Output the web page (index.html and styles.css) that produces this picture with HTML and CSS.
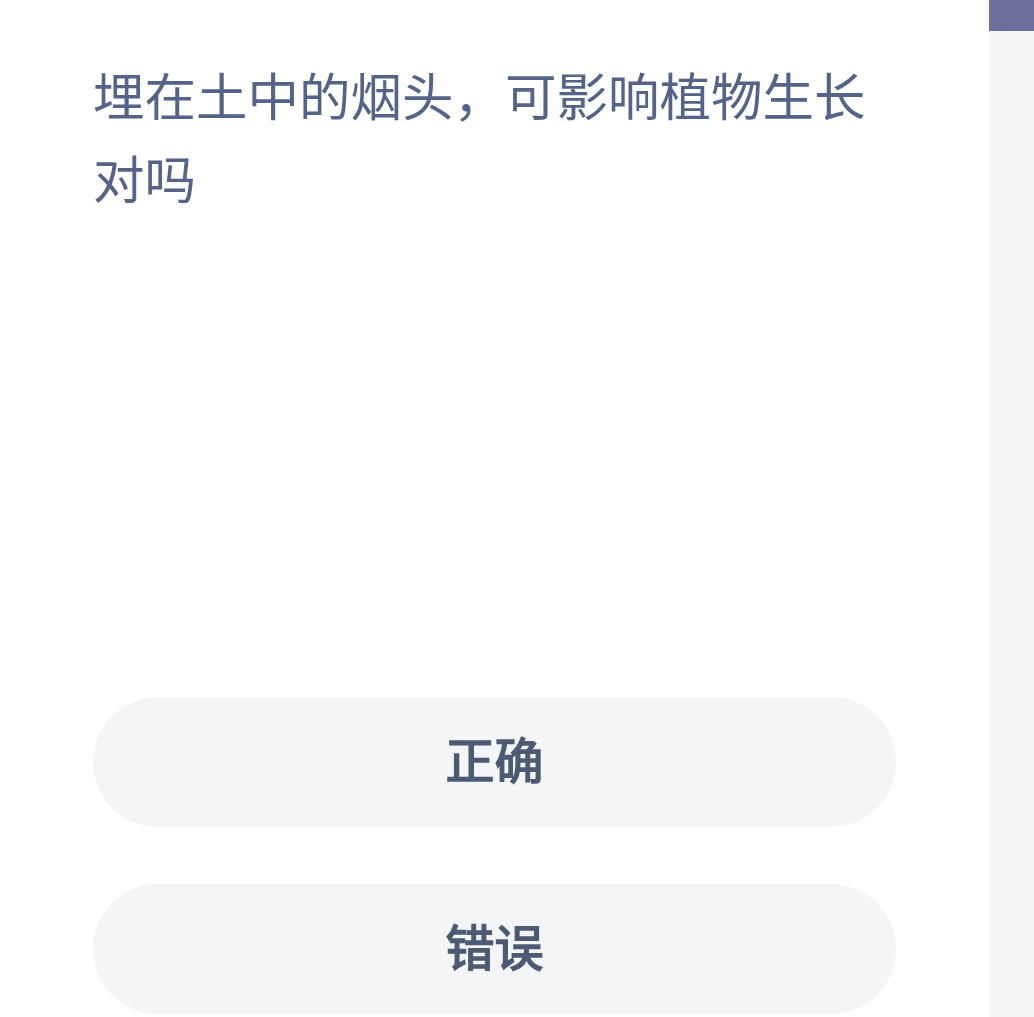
FILE: index.html
```html
<!DOCTYPE html>
<html>
<head>
  <meta charset="utf-8">
  <link rel="stylesheet" href="styles.css">
</head>
<body>
  <div class="page">
    <div class="quiz">
      <div class="question">埋在土中的烟头，可影响植物生长对吗</div>

      <!-- answer options -->
      <div class="options">
        <div class="option">正确</div>
        <div class="option">错误</div>
      </div>
    </div>

    <!-- right side scroll rail -->
    <div class="rail">
      <div class="rail-thumb"></div>
    </div>
  </div>
</body>
</html>
```

FILE: styles.css
```css
html, body {
  margin: 0;
  padding: 0;
  background: #fff;
}

body {
  font-family: "Noto Sans CJK SC", "Noto Sans", sans-serif;
}

.page {
  display: flex;
  min-height: 100vh;
}

.quiz {
  flex: 1;
  padding: 52px 93px 0 93px;
}

.question {
  font-size: 51.5px;
  line-height: 83px;
  color: #536488;
  font-weight: 400;
}

.options {
  margin-top: 479px;
  display: flex;
  flex-direction: column;
  gap: 57px;
}

.option {
  height: 130px;
  padding-bottom: 10px;
  box-sizing: border-box;
  border-radius: 65px;
  background: #f4f5f7;
  display: flex;
  align-items: center;
  justify-content: center;
  font-size: 49px;
  font-weight: 400;
  -webkit-text-stroke: 1.6px #4b5b73; /* no medium weight installed */
  color: #4b5b73;
}

.rail {
  width: 45px;
  background: #f4f4f4;
}

.rail-thumb {
  height: 31px;
  background: #6e6e9c;
}
```
